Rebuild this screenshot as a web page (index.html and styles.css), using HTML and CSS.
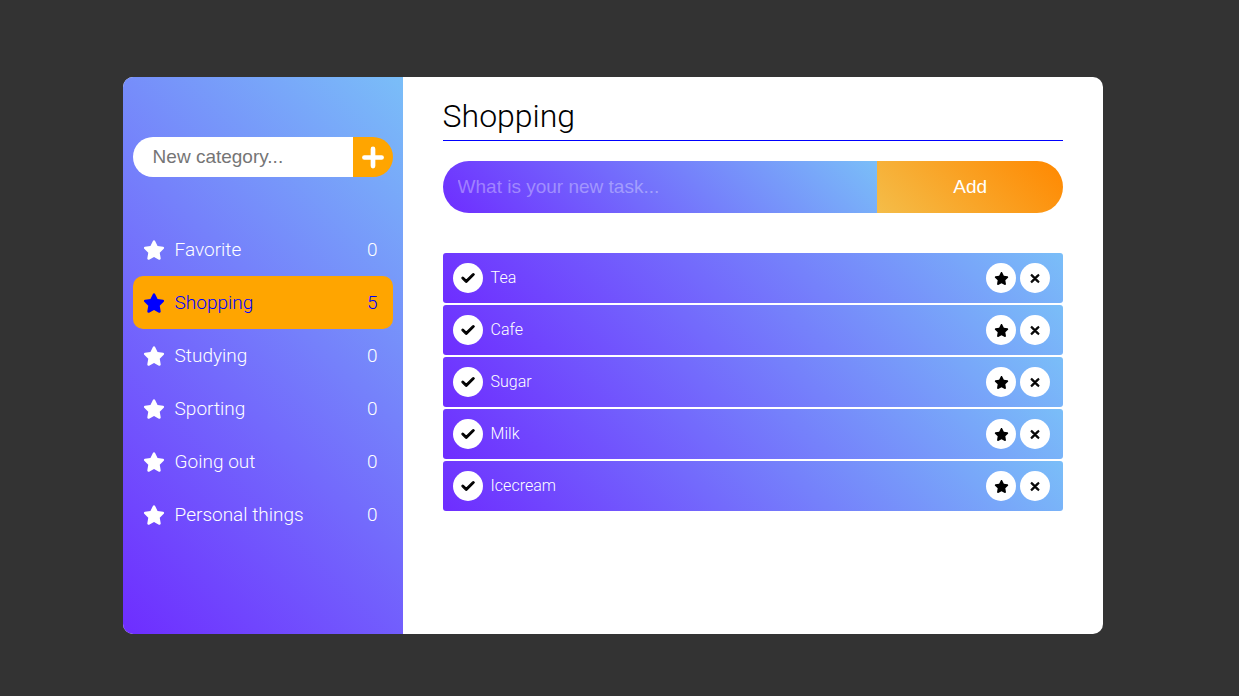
FILE: index.html
```html
<!DOCTYPE html>
<html lang="en">
<head>
<meta charset="utf-8">
<meta name="viewport" content="width=device-width, initial-scale=1">
<title>Shopping</title>
<link rel="stylesheet" href="styles.css">
</head>
<body>
<svg class="sprite" aria-hidden="true">
  <symbol id="star" viewBox="0 0 576 512"><path d="M316.9 18C311.6 7 300.4 0 288.1 0s-23.4 7-28.8 18L195 150.3 51.4 171.5c-12 1.8-22 10.2-25.7 21.7s-.7 24.2 7.9 32.7L137.8 329 113.2 474.7c-2 12 3 24.2 12.9 31.3s23 8 33.8 2.3l128.3-68.5 128.3 68.5c10.8 5.7 23.9 4.9 33.8-2.3s14.9-19.3 12.9-31.3L438.5 329 542.7 225.9c8.6-8.5 11.7-21.2 7.9-32.7s-13.7-19.9-25.7-21.7L381.2 150.3 316.9 18z"/></symbol>
  <symbol id="plus" viewBox="0 0 448 512"><path d="M256 80c0-17.700-14.300-32-32-32s-32 14.300-32 32V224H48c-17.700 0-32 14.300-32 32s14.300 32 32 32H192V432c0 17.700 14.300 32 32 32s32-14.300 32-32V288H400c17.700 0 32-14.300 32-32s-14.300-32-32-32H256V80z"/></symbol>
  <symbol id="check" viewBox="-16 0 480 512"><path d="M438.6 105.4c12.5 12.5 12.5 32.8 0 45.3l-256 256c-12.5 12.5-32.8 12.5-45.3 0l-128-128c-12.500-12.500-12.500-32.800 0-45.300s32.800-12.500 45.300 0L160 338.700 393.400 105.400c12.500-12.500 32.800-12.500 45.300 0z"/></symbol>
  <symbol id="cross" viewBox="0 0 384 512"><path d="M342.6 150.6c12.5-12.5 12.5-32.8 0-45.3s-32.8-12.5-45.3 0L192 210.7 86.6 105.4c-12.5-12.5-32.8-12.5-45.3 0s-12.5 32.8 0 45.3L146.7 256 41.4 361.4c-12.5 12.5-12.5 32.8 0 45.3s32.8 12.5 45.3 0L192 301.3 297.4 406.6c12.5 12.5 32.8 12.5 45.3 0s12.5-32.8 0-45.3L237.3 256 342.6 150.6z"/></symbol>
</svg>
<div class="app">
  <aside class="sidebar">
    <form class="category-form">
      <input class="category-input" type="text" placeholder="New category..." aria-label="New category">
      <button class="category-add" type="button" aria-label="Add category"><svg class="icon-plus"><use href="#plus"/></svg></button>
    </form>
    <nav class="categories">
      <a class="category" href="#"><svg class="icon-star"><use href="#star"/></svg><span class="category-name">Favorite</span><span>0</span></a>
      <a class="category active" href="#" aria-current="page"><svg class="icon-star"><use href="#star"/></svg><span class="category-name">Shopping</span><span>5</span></a>
      <a class="category" href="#"><svg class="icon-star"><use href="#star"/></svg><span class="category-name">Studying</span><span>0</span></a>
      <a class="category" href="#"><svg class="icon-star"><use href="#star"/></svg><span class="category-name">Sporting</span><span>0</span></a>
      <a class="category" href="#"><svg class="icon-star"><use href="#star"/></svg><span class="category-name">Going out</span><span>0</span></a>
      <a class="category" href="#"><svg class="icon-star"><use href="#star"/></svg><span class="category-name">Personal things</span><span>0</span></a>
    </nav>
  </aside>
  <main class="content">
    <h1 class="title">Shopping</h1>
    <form class="task-form">
      <input class="task-input" type="text" placeholder="What is your new task..." aria-label="New task">
      <button class="task-add" type="button">Add</button>
    </form>
    <ul class="tasks">
      <li class="task"><button class="round" type="button" aria-label="Complete Tea"><svg class="icon-check"><use href="#check"/></svg></button><span class="task-name">Tea</span><button class="round" type="button" aria-label="Favorite Tea"><svg class="icon-small-star"><use href="#star"/></svg></button><button class="round" type="button" aria-label="Delete Tea"><svg class="icon-cross"><use href="#cross"/></svg></button></li>
      <li class="task"><button class="round" type="button" aria-label="Complete Cafe"><svg class="icon-check"><use href="#check"/></svg></button><span class="task-name">Cafe</span><button class="round" type="button" aria-label="Favorite Cafe"><svg class="icon-small-star"><use href="#star"/></svg></button><button class="round" type="button" aria-label="Delete Cafe"><svg class="icon-cross"><use href="#cross"/></svg></button></li>
      <li class="task"><button class="round" type="button" aria-label="Complete Sugar"><svg class="icon-check"><use href="#check"/></svg></button><span class="task-name">Sugar</span><button class="round" type="button" aria-label="Favorite Sugar"><svg class="icon-small-star"><use href="#star"/></svg></button><button class="round" type="button" aria-label="Delete Sugar"><svg class="icon-cross"><use href="#cross"/></svg></button></li>
      <li class="task"><button class="round" type="button" aria-label="Complete Milk"><svg class="icon-check"><use href="#check"/></svg></button><span class="task-name">Milk</span><button class="round" type="button" aria-label="Favorite Milk"><svg class="icon-small-star"><use href="#star"/></svg></button><button class="round" type="button" aria-label="Delete Milk"><svg class="icon-cross"><use href="#cross"/></svg></button></li>
      <li class="task"><button class="round" type="button" aria-label="Complete Icecream"><svg class="icon-check"><use href="#check"/></svg></button><span class="task-name">Icecream</span><button class="round" type="button" aria-label="Favorite Icecream"><svg class="icon-small-star"><use href="#star"/></svg></button><button class="round" type="button" aria-label="Delete Icecream"><svg class="icon-cross"><use href="#cross"/></svg></button></li>
    </ul>
  </main>
</div>
</body>
</html>
```
FILE: styles.css
```css
:root {
  --cool: linear-gradient(45deg, #6e2dff, #7abef8);
  --warm: linear-gradient(45deg, #f4bd49, #ff8800);
}

* {
  box-sizing: border-box;
}

body {
  margin: 0;
  min-height: 100vh;
  padding: 77px 13px 0 0;
  background: #333;
  font-family: Roboto, "Liberation Sans", sans-serif;
  font-weight: 300;
}

.sprite {
  display: none;
}

svg {
  flex: none;
  overflow: visible;
  fill: currentColor;
}

button,
input {
  margin: 0;
  padding: 0;
  border: 0;
  border-radius: 0;
  font-family: "Liberation Sans", Arial, sans-serif;
  font-size: 19px;
}

button {
  cursor: pointer;
}

.app {
  display: grid;
  grid-template-columns: 280px minmax(0, 1fr);
  width: 80%;
  min-height: 80vh;
  margin: 0 auto;
  border-radius: 10px;
  overflow: hidden;
  background: #fff;
}

.sidebar {
  padding: 60px 10px;
  background: var(--cool);
}

.category-form {
  display: grid;
  grid-template-columns: minmax(0, 1fr) 40px;
  height: 40px;
  margin-bottom: 46px;
  border-radius: 20px;
  overflow: hidden;
}

.category-input {
  padding: 0 20px;
  background: #fff;
}

.category-input::placeholder {
  color: #757575;
}

.category-add {
  display: flex;
  align-items: center;
  justify-content: center;
  background: orange;
  color: #fff;
}

.icon-plus {
  width: 22px;
  height: 25px;
  stroke: currentColor;
  stroke-width: 32px;
}

.category {
  display: flex;
  align-items: center;
  gap: 10px;
  padding: 15px 15px 15px 10px;
  border-radius: 10px;
  color: #fff;
  font-size: 19px;
  line-height: 23px;
  text-decoration: none;
}

.category.active {
  background: orange;
  color: #00f;
}

.category-name,
.task-name {
  flex: 1;
}

.icon-star {
  width: 22px;
  height: 20px;
}

.content {
  padding: 20px 40px;
}

.title {
  margin: 0 0 20px;
  padding-bottom: 5px;
  border-bottom: 1px solid #00f;
  font-size: 32px;
  font-weight: 300;
  line-height: 38px;
}

.task-form {
  display: grid;
  grid-template-columns: minmax(0, 7fr) minmax(0, 3fr);
  height: 52px;
  margin-bottom: 40px;
  border-radius: 26px;
  overflow: hidden;
}

.task-input {
  padding: 0 15px;
  background: var(--cool);
  color: #fff;
}

.task-input::placeholder {
  color: rgba(255, 255, 255, 0.35);
}

.task-add {
  background: var(--warm);
  color: #fff;
}

.tasks {
  display: grid;
  gap: 2px;
  margin: 0;
  padding: 0;
  list-style: none;
}

.task {
  display: flex;
  align-items: center;
  gap: 4px;
  padding: 10px 13px 10px 10px;
  border-radius: 3px;
  background: var(--cool);
  color: #fff;
  font-size: 16px;
  line-height: 20px;
}

.task-name {
  padding-left: 4px;
}

.round {
  display: flex;
  align-items: center;
  justify-content: center;
  width: 30px;
  height: 30px;
  border-radius: 50%;
  background: #fff;
  color: #000;
}

.icon-check {
  width: 14px;
  height: 14px;
  stroke: currentColor;
  stroke-width: 40px;
}

.icon-small-star {
  width: 15px;
  height: 13px;
}

.icon-cross {
  width: 10px;
  height: 13px;
  stroke: currentColor;
  stroke-width: 36px;
}
```
